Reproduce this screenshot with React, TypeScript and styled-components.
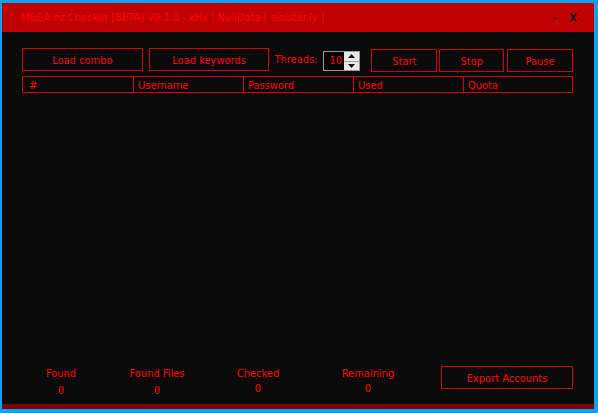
import React from "react";
import styled, { createGlobalStyle } from "styled-components";

const GlobalStyle = createGlobalStyle`
  html, body {
    margin: 0;
    padding: 0;
    background: #0da2f0;
  }
  * {
    box-sizing: border-box;
  }
`;

const Window = styled.div`
  height: 100vh;
  display: flex;
  flex-direction: column;
  border-style: solid;
  border-color: #0da2f0;
  border-width: 3px 4px 4px 2px;
  font-family: Tahoma, "DejaVu Sans Condensed", "Liberation Sans", sans-serif;
  font-size: 11px;
`;

const TitleBar = styled.div`
  height: 29px;
  background: #c00000;
  display: flex;
  align-items: center;
  padding: 0 17px 0 19px;
`;

const Title = styled.span`
  color: #ff0000;
  flex: 1;
`;

const Ctrl = styled.span`
  color: #111;
  font-weight: bold;
  font-family: "Liberation Sans", sans-serif;
  font-size: 12px;
  margin-left: 12px;
`;

const Body = styled.div`
  flex: 1;
  background: #0a0a0a;
  display: flex;
  flex-direction: column;
  padding: 16px 21px 0 20px;
  color: #ff0000;
`;

const Toolbar = styled.div`
  display: flex;
  align-items: flex-start;
  height: 24px;
`;

const Button = styled.button<{ $w: number; $ml?: number; $mt?: number }>`
  width: ${(p) => p.$w}px;
  height: 23px;
  margin-left: ${(p) => p.$ml ?? 0}px;
  margin-top: ${(p) => p.$mt ?? 0}px;
  background: transparent;
  border: 1px solid #d00000;
  color: #ff0000;
  font-family: inherit;
  font-size: 11px;
  padding: 1px 0 0;
  cursor: pointer;
`;

const Label = styled.span`
  margin-left: 5px;
  margin-top: 5px;
  line-height: 14px;
`;

const Spin = styled.div`
  width: 38px;
  height: 20px;
  margin-left: 5px;
  margin-top: 3px;
  border: 1px solid #9a9a9a;
  background: #000000;
  display: flex;
  overflow: hidden;
`;

const SpinValue = styled.div`
  width: 21px;
  height: 18px;
  background: #000000;
  color: #ff0000;
  line-height: 18px;
  padding-left: 6px;
`;

const SpinArrows = styled.div`
  width: 15px;
  height: 18px;
  display: flex;
  flex-direction: column;
  gap: 1px;
  background: #a0a0a0;
`;

const Arrow = styled.div`
  flex: 1;
  background: #e6e6e6;
  display: flex;
  align-items: center;
  justify-content: center;
`;

const Header = styled.div`
  margin-top: 4px;
  display: grid;
  grid-template-columns: 110px 110px 110px 110px 1fr;
  height: 17px;
  border: 1px solid #d00000;
`;

const HeaderCell = styled.div`
  border-left: 1px solid #d00000;
  padding: 1px 0 0 4px;
  line-height: 15px;
  &:first-child {
    border-left: none;
    padding-left: 6px;
  }
`;

const Spacer = styled.div`
  flex: 1;
`;

const Footer = styled.div`
  display: flex;
  align-items: flex-start;
  padding-bottom: 7px;
`;

const Stat = styled.div<{ $w: number }>`
  width: ${(p) => p.$w}px;
  display: flex;
  flex-direction: column;
  align-items: center;
  padding-top: 1px;
`;

const StatValue = styled.span<{ $drop: number }>`
  margin-top: ${(p) => p.$drop}px;
`;

const BottomBand = styled.div`
  height: 5px;
  background: #800000;
`;

const UpDown = ({ up }: { up: boolean }) => (
  <svg width="7" height="4" viewBox="0 0 7 4">
    <path d={up ? "M0 4 L3.5 0 L7 4 Z" : "M0 0 L3.5 4 L7 0 Z"} fill="#111" />
  </svg>
);

const stats = [
  { label: "Found", w: 78, drop: 4 },
  { label: "Found Files", w: 114, drop: 4 },
  { label: "Checked", w: 88, drop: 2 },
  { label: "Remaining", w: 132, drop: 2 },
];

const App = () => {
  return (
    <>
      <GlobalStyle />
      <Window>
        <TitleBar>
          <Title>MEGA.nz Checker [BETA] V0.1.0 - xHx | NullData [ sinister.ly ]</Title>
          <Ctrl>-</Ctrl>
          <Ctrl>X</Ctrl>
        </TitleBar>
        <Body>
          <Toolbar>
            <Button $w={121}>Load combo</Button>
            <Button $w={121} $ml={6}>
              Load keywords
            </Button>
            <Label>Threads:</Label>
            <Spin>
              <SpinValue>10</SpinValue>
              <SpinArrows>
                <Arrow>
                  <UpDown up />
                </Arrow>
                <Arrow>
                  <UpDown up={false} />
                </Arrow>
              </SpinArrows>
            </Spin>
            <Button $w={66} $ml={11} $mt={1}>
              Start
            </Button>
            <Button $w={65} $ml={2} $mt={1}>
              Stop
            </Button>
            <Button $w={66} $ml={3} $mt={1}>
              Pause
            </Button>
          </Toolbar>
          <Header>
            <HeaderCell>#</HeaderCell>
            <HeaderCell>Username</HeaderCell>
            <HeaderCell>Password</HeaderCell>
            <HeaderCell>Used</HeaderCell>
            <HeaderCell>Quota</HeaderCell>
          </Header>
          <Spacer />
          <Footer>
            {stats.map((s) => (
              <Stat key={s.label} $w={s.w}>
                <span>{s.label}</span>
                <StatValue $drop={s.drop}>0</StatValue>
              </Stat>
            ))}
            <Button $w={132} $ml={7}>
              Export Accounts
            </Button>
          </Footer>
        </Body>
        <BottomBand />
      </Window>
    </>
  );
};

export default App;
